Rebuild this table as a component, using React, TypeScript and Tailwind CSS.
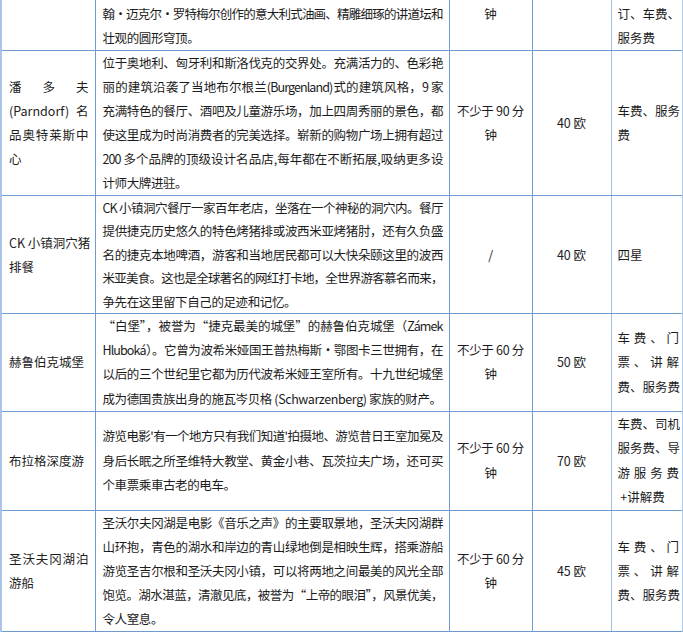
import React from "react";

type Row = {
  name: string[];
  desc: string[];
  time: string[];
  price: string;
  fee: string[];
  leading?: string;
};

const rows: Row[] = [
  {
    name: ["潘 多 夫", "(Parndorf) 名", "品奥特莱斯中", "心"],
    desc: [
      "位于奥地利、匈牙利和斯洛伐克的交界处。充满活力的、色彩艳",
      "丽的建筑沿袭了当地布尔根兰(Burgenland)式的建筑风格，9 家",
      "充满特色的餐厅、酒吧及儿童游乐场，加上四周秀丽的景色，都",
      "使这里成为时尚消费者的完美选择。崭新的购物广场上拥有超过",
      "200 多个品牌的顶级设计名品店,每年都在不断拓展,吸纳更多设",
      "计师大牌进驻。",
    ],
    time: ["不少于 90 分", "钟"],
    price: "40 欧",
    fee: ["车费、服务", "费"],
  },
  {
    name: ["CK 小镇洞穴猪", "排餐"],
    desc: [
      "CK 小镇洞穴餐厅一家百年老店，坐落在一个神秘的洞穴内。餐厅",
      "提供捷克历史悠久的特色烤猪排或波西米亚烤猪肘，还有久负盛",
      "名的捷克本地啤酒，游客和当地居民都可以大快朵颐这里的波西",
      "米亚美食。这也是全球著名的网红打卡地，全世界游客慕名而来，",
      "争先在这里留下自己的足迹和记忆。",
    ],
    time: ["/"],
    price: "40 欧",
    fee: ["四星"],
    leading: "leading-[23.4px]",
  },
  {
    name: ["赫鲁伯克城堡"],
    desc: [
      "“白堡”，被誉为“捷克最美的城堡”的赫鲁伯克城堡（Zámek",
      "Hluboká）。它曾为波希米娅国王普热梅斯•鄂图卡三世拥有，在",
      "以后的三个世纪里它都为历代波希米娅王室所有。十九世纪城堡",
      "成为德国贵族出身的施瓦岑贝格 (Schwarzenberg) 家族的财产。",
    ],
    time: ["不少于 60 分", "钟"],
    price: "50 欧",
    fee: ["车费、门", "票、讲解", "费、服务费"],
    leading: "leading-[24.2px]",
  },
  {
    name: ["布拉格深度游"],
    desc: [
      "游览电影'有一个地方只有我们知道'拍摄地、游览昔日王室加冕及",
      "身后长眠之所圣维特大教堂、黄金小巷、瓦茨拉夫广场，还可买",
      "个車票乘車古老的电车。",
    ],
    time: ["不少于 60 分", "钟"],
    price: "70 欧",
    fee: ["车费、司机", "服务费、导", "游服务费", " +讲解费"],
    leading: "leading-[24.5px]",
  },
  {
    name: ["圣沃夫冈湖泊", "游船"],
    desc: [
      "圣沃尔夫冈湖是电影《音乐之声》的主要取景地，圣沃夫冈湖群",
      "山环抱，青色的湖水和岸边的青山绿地倒是相映生辉，搭乘游船",
      "游览圣吉尔根和圣沃夫冈小镇，可以将两地之间最美的风光全部",
      "饱览。湖水湛蓝，清澈见底，被誉为“上帝的眼泪”，风景优美，",
      "令人窒息。",
    ],
    time: ["不少于 60 分", "钟"],
    price: "45 欧",
    fee: ["车费、门", "票、讲解", "费、服务费"],
  },
];

// justified block: every line but the last is stretched edge to edge
const Lines = ({ lines, tight }: { lines: string[]; tight?: boolean }) => (
  <>
    {lines.map((l, i) => (
      <div
        key={i}
        className={
          i < lines.length - 1 && lines.length > 1
            ? `whitespace-nowrap text-justify [text-align-last:justify] ${tight ? "tracking-[-0.9px]" : ""}`
            : `whitespace-pre ${tight ? "tracking-[-0.4px]" : ""}`
        }
      >
        {l}
      </div>
    ))}
  </>
);

const cell = "border border-[#6f9bd1] align-middle";

export default function App() {
  return (
    <div
      className="w-[683px] h-[632px] overflow-hidden bg-white text-[#1c1c1c] text-[12.5px] leading-[24px]"
      style={{ fontFamily: '"Noto Sans CJK SC", "Noto Sans", sans-serif' }}
    >
      <table className="table-fixed border-collapse w-[682px]">
        <colgroup>
          <col className="w-[94px]" />
          <col className="w-[354px]" />
          <col className="w-[83px]" />
          <col className="w-[79px]" />
          <col className="w-[72px]" />
        </colgroup>
        <tbody>
          {/* tail of the row scrolled off the top */}
          <tr>
            <td className="border-l-[2px] border-l-[#a9c4e6] border-r border-r-[#6f9bd1] border-b border-b-[#6f9bd1]"></td>
            <td className="border-x border-b border-[#6f9bd1] align-top pt-[2px] pl-[7px] pr-[6px]">
              <Lines tight lines={["翰•迈克尔•罗特梅尔创作的意大利式油画、精雕细琢的讲道坛和", "壮观的圆形穹顶。"]} />
            </td>
            <td className="border-x border-b border-[#6f9bd1] align-top pt-[2px] text-center">钟</td>
            <td className="border-l border-l-[#6f9bd1] border-r border-r-[#a3bfe3] border-b border-b-[#6f9bd1]"></td>
            <td className="border-r-[2px] border-r-[#b3cbea] border-b border-b-[#6f9bd1] align-top pt-[2px] pl-[6px] pr-[3px]">
              <Lines lines={["订、车费、", "服务费"]} />
            </td>
          </tr>
          {rows.map((r, i) => (
            <tr key={i} className={r.leading}>
              <td className={`${cell} border-l-[2px] border-l-[#a9c4e6] pl-[7px] pr-[6px]`}>
                <Lines lines={r.name} />
              </td>
              <td className={`${cell} pl-[7px] pr-[6px]`}>
                <Lines tight lines={r.desc} />
              </td>
              <td className={`${cell} text-center px-[2px] tracking-[-0.3px]`}>
                {r.time.map((t, j) => (
                  <div key={j}>{t}</div>
                ))}
              </td>
              <td className={`${cell} border-r-[#a3bfe3] text-center`}>{r.price}</td>
              <td className={`${cell} border-r-[2px] border-r-[#b3cbea] pl-[6px] pr-[3px]`}>
                <Lines lines={r.fee} />
              </td>
            </tr>
          ))}
        </tbody>
      </table>
    </div>
  );
}
